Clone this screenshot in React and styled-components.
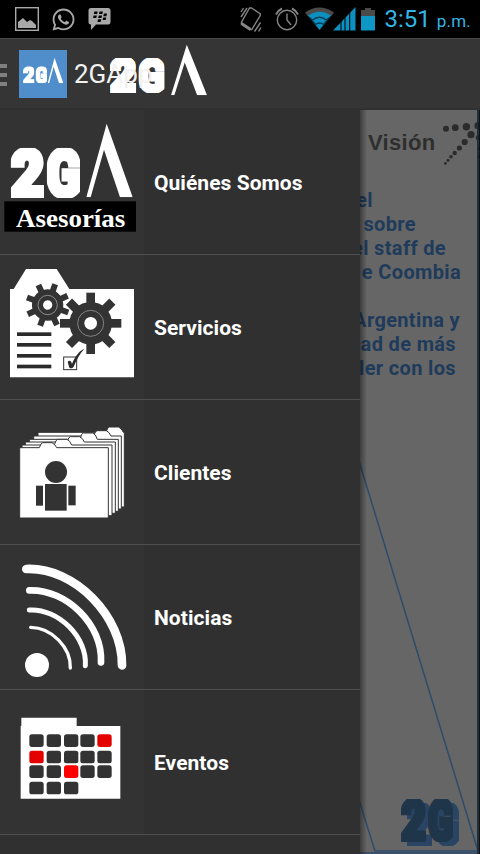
import styled, { createGlobalStyle } from 'styled-components'
import { FaWhatsapp } from 'react-icons/fa'

const GlobalStyle = createGlobalStyle`
  * {
    box-sizing: border-box;
  }
  body {
    margin: 0;
    background: #000;
    font-family: Roboto, "Liberation Sans", sans-serif;
  }
`
const Screen = styled.div`
  width: 480px;
  height: 854px;
  display: flex;
  flex-direction: column;
  overflow: hidden;
`
const StatusBar = styled.div`
  height: 38px;
  flex: none;
  display: flex;
  align-items: center;
  justify-content: space-between;
  padding: 0 9px 0 15px;
  background: #000;
`
const StatusGroup = styled.div`
  display: flex;
  align-items: center;
  gap: ${props => props.$gap}px;

  svg {
    display: block;
  }
`
const Clock = styled.div`
  display: flex;
  align-items: baseline;
  gap: 6px;
  margin-left: 7px;
  color: #33b5e5;
  font-size: 24px;
  line-height: 38px;
  padding-top: 2px;
`
const Meridiem = styled.span`
  font-size: 17px;
  letter-spacing: 0.2px;
`
const ActionBar = styled.header`
  height: 72px;
  flex: none;
  display: flex;
  align-items: center;
  background: #353535;
  border-top: 1px solid #484848;
  border-bottom: 2px solid #303030;
`
const DrawerHandle = styled.div`
  width: 7px;
  display: flex;
  flex-direction: column;
  gap: 5px;
  margin: 3px 12px 0 0;

  i {
    height: 4px;
    background: #808080;
  }
`
const AppIcon = styled.div`
  width: 48px;
  height: 48px;
  background: #4f8dcb;

  svg {
    display: block;
  }
`
const TitleArea = styled.div`
  position: relative;
  height: 69px;
  width: 140px;
  margin-left: 7px;
`
const Title = styled.h1`
  position: relative;
  margin: 0;
  font-size: 26px;
  font-weight: 400;
  line-height: 71px;
  color: #f1f1f1;
`
const TitleLogo = styled.svg`
  position: absolute;
  left: 36px;
  top: 5px;
`
const Body = styled.main`
  position: relative;
  flex: 1;
  min-height: 0;
  background: #666;
`
const Page = styled.div`
  position: relative;
  height: 744px;
  padding-top: 20px;
`
const PageArt = styled.svg`
  position: absolute;
  left: 0;
  top: 0;
`
const PageTitle = styled.h2`
  position: relative;
  margin: 0 0 0 368px;
  font: bold 22px/26px "Liberation Sans", sans-serif;
  letter-spacing: 0.3px;
  color: #2e2e2e;
`
const PageText = styled.div`
  position: relative;
  margin-top: 32px;
  color: #1f3b5b;
  font-size: 20px;
  font-weight: 700;
  line-height: 24px;
  letter-spacing: 0.35px;
`
const Line = styled.div`
  height: 24px;
  text-align: right;
  white-space: pre;
  padding-right: ${props => props.$end}px;
`
const Drawer = styled.nav`
  position: absolute;
  left: 0;
  top: 0;
  bottom: 0;
  width: 360px;
  overflow: hidden;
  background: #303030;
`
const DrawerShadow = styled.div`
  position: absolute;
  left: 360px;
  top: 0;
  bottom: 0;
  width: 7px;
  background: linear-gradient(to right, rgba(0, 0, 0, 0.4), transparent);
`
const Item = styled.div`
  height: 145px;
  display: flex;
  align-items: center;
  border-bottom: 1px solid #505050;
  color: #fff;
`
const ItemLabel = styled.span`
  padding-top: 2px;
  font-size: 21px;
  font-weight: 700;
  letter-spacing: 0.05px;
`
const ItemIcon = styled.div`
  width: 144px;
  height: 144px;
  margin-right: 10px;
  background: #333;

  svg {
    display: block;
  }
`

// block lettering: heavy strokes, corners cut straight by the clip shapes
const Letters = ({ id, x, y, width, height, color = '#fff' }) => (
  <svg x={x} y={y} width={width} height={height} viewBox="0 0 208 151" preserveAspectRatio="none">
    <clipPath id={`${id}-two`}>
      <polygon points="18,0 82,0 100,18 100,151 0,151 0,18" />
    </clipPath>
    <clipPath id={`${id}-gee`}>
      <polygon points="126,0 190,0 208,18 208,133 190,151 126,151 108,133 108,18" />
    </clipPath>
    <g fill={color} stroke={color} strokeWidth="17" strokeLinejoin="miter" fontFamily="Roboto" fontWeight="900" fontSize="196">
      <g clipPath={`url(#${id}-two)`}>
        <text x="0" y="144" textLength="101" lengthAdjust="spacingAndGlyphs">2</text>
      </g>
      <g clipPath={`url(#${id}-gee)`}>
        <text x="107" y="145" textLength="104" lengthAdjust="spacingAndGlyphs">G</text>
      </g>
    </g>
  </svg>
)

const Peak = ({ x, y, width, height }) => (
  <svg x={x} y={y} width={width} height={height} viewBox="0 0 139 221" preserveAspectRatio="none">
    <polygon points="61,0 139,221 101,221 53,78 13,221 0,221" fill="#fff" />
  </svg>
)

const Gear = ({ cx, cy, body, outer, tooth, ring, hole, turn = 0 }) => (
  <g transform={`translate(${cx} ${cy}) rotate(${turn})`}>
    <g fill="#333">
      <circle r={body} />
      {[0, 45, 90, 135, 180, 225, 270, 315].map(a => (
        <rect key={a} x={-tooth / 2} y={-outer} width={tooth} height={outer} transform={`rotate(${a})`} />
      ))}
    </g>
    <circle r={ring} fill="none" stroke="#aaa" strokeWidth="2" />
    <circle r={hole} fill="#fff" />
  </g>
)

const AboutIcon = () => (
  <svg width="144" height="144" viewBox="0 0 432 432">
    <Letters id="about" x={32} y={113} width={208} height={151} />
    <Peak x={259} y={41} width={139} height={221} />
    <rect x="13" y="274" width="395" height="91" fill="#000" />
    <text x="48" y="351" textLength="328" lengthAdjust="spacingAndGlyphs" fontFamily="Liberation Serif, serif" fontWeight="700" fontSize="74" fill="#fff">Asesorías</text>
  </svg>
)

const ServicesIcon = () => (
  <svg width="144" height="144" viewBox="0 0 432 432">
    <path d="M30 102h11l37-60h92l38 60h194v265H30z" fill="#fff" />
    <Gear cx={143} cy={150} body={47} outer={66} tooth={18} ring={29} hole={14} turn={20} />
    <Gear cx={272} cy={205} body={64} outer={92} tooth={26} ring={39} hole={19} />
    <g fill="#2b2b2b">
      <rect x="51" y="232" width="103" height="11" />
      <rect x="51" y="264" width="103" height="11" />
      <rect x="51" y="297" width="103" height="11" />
      <rect x="51" y="329" width="103" height="11" />
    </g>
    <rect x="191" y="306" width="39" height="38" fill="none" stroke="#333" strokeWidth="3" />
    <path d="M203 320c6-6 11-3 13 7 8-20 19-38 37-46-16 18-25 37-32 54-5 6-12 6-14 0z" fill="#2b2b2b" />
  </svg>
)

const ClientsIcon = () => {
  const folders = [
    { x: 114, y: 97, right: 373, bottom: 321, tab: 318, lift: 16 },
    { x: 101, y: 108, right: 364, bottom: 327, tab: 281, lift: 16 },
    { x: 88, y: 118, right: 355, bottom: 334, tab: 240, lift: 19 },
    { x: 76, y: 126, right: 346, bottom: 340, tab: 201, lift: 16 },
    { x: 66, y: 135, right: 336, bottom: 347, tab: 163, lift: 17 },
    { x: 59, y: 143, right: 325, bottom: 354, tab: 118, lift: 15 },
  ]
  return (
    <svg width="144" height="144" viewBox="0 0 432 432">
      {folders.map(f => (
        <path
          key={f.x}
          d={`M${f.x} ${f.y}H${f.tab}l5 ${-f.lift + 4} 5 -4h28l8 6 6 ${f.lift - 6}H${f.right}V${f.bottom}H${f.x}z`}
          fill="#fff"
          stroke="#333"
          strokeWidth="3"
        />
      ))}
      <g fill="#333">
        <circle cx="168" cy="216" r="33" />
        <rect x="135" y="252" width="65" height="80" />
        <rect x="108" y="257" width="21" height="60" />
        <rect x="205" y="257" width="22" height="59" />
      </g>
    </svg>
  )
}

const NewsIcon = () => (
  <svg width="144" height="144" viewBox="0 0 432 432" fill="none" stroke="#fff" strokeLinecap="round">
    <circle cx="111" cy="360" r="36" fill="#fff" stroke="none" />
    <path d="M79 72C225 66 368 215 366 361" strokeWidth="26" />
    <path d="M88 136C200 132 309 240 303 352" strokeWidth="20" />
    <path d="M88 195C175 190 262 277 256 362" strokeWidth="15" />
    <path d="M92 247C155 248 213 307 211 369" strokeWidth="10" />
  </svg>
)

const EventsIcon = () => {
  const columns = [88, 140, 192, 241, 292]
  const rows = [133, 182, 226, 275]
  const marked = { '0-4': '#e50000', '1-0': '#e50000', '2-2': '#f00' }
  return (
    <svg width="144" height="144" viewBox="0 0 432 432">
      <path d="M64 83h166v25h131v218H62V108h2z" fill="#fff" />
      {rows.map((y, r) => columns.slice(0, r === 3 ? 3 : 5).map((x, c) => (
        <rect key={`${r}-${c}`} x={x} y={y} width="43" height="38" rx="8" fill={marked[`${r}-${c}`] || '#333'} />
      )))}
    </svg>
  )
}

const items = [
  { label: 'Quiénes Somos', Icon: AboutIcon },
  { label: 'Servicios', Icon: ServicesIcon },
  { label: 'Clientes', Icon: ClientsIcon },
  { label: 'Noticias', Icon: NewsIcon },
  { label: 'Eventos', Icon: EventsIcon },
]

const lines = [
  { text: 'el', end: 107 },
  { text: 'sobre', end: 64 },
  { text: 'el staff de', end: 34 },
  { text: 'e Coombia', end: 19 },
  { text: '', end: 0 },
  { text: 'Argentina y', end: 20 },
  { text: 'ad de más', end: 24 },
  { text: 'ler con los', end: 24 },
]

const dots = [
  [446, 18.7, 3], [455.3, 17.7, 3.4], [466.4, 16.7, 3.7], [478, 15.7, 3.6],
  [471, 24.7, 3.6], [464.7, 32, 3.1], [459.4, 38, 2.6], [454.7, 43, 2.2],
  [451, 46.7, 1.8], [448, 50.3, 1.5], [445.4, 53.4, 1.3], [478.5, 27.7, 2.8],
  [479, 38.5, 1.8], [479, 46.5, 1.8],
]

const NotificationIcons = () => (
  <StatusGroup $gap={12}>
    <svg width="24" height="24" viewBox="0 0 24 24">
      <rect x=".7" y=".7" width="22.6" height="22.6" fill="none" stroke="#a9a9a9" strokeWidth="1.4" />
      <path d="M3 21v-6l5-4 4 4 3-2 2 1 4 4v3z" fill="#a9a9a9" />
    </svg>
    <FaWhatsapp size={25} color="#a9a9a9" />
    <svg width="23" height="24" viewBox="0 0 23 24">
      <path d="M3 1h17a2.5 2.5 0 0 1 2.5 2.500V15a2.5 2.5 0 0 1-2.500 2.5H8L3 23v-5.500a2.5 2.5 0 0 1-2.500-2.500V3.500A2.5 2.5 0 0 1 3 1z" fill="#a9a9a9" />
      <g fill="#000">
        <path d="M6.400 4.500h3.300l-.6 2.600H5.800zM11.600 4.500h3.300l-.6 2.600H11zM5.600 8.400h3.300l-.6 2.600H5zM10.800 8.400h3.300l-.6 2.600h-3.300zM15.900 6.600h3.100l-.6 2.600h-3.100zM15.200 10.400h3.100l-.6 2.600h-3.100zM10 12.300h3.300l-.6 2.600H9.400z" />
      </g>
    </svg>
  </StatusGroup>
)

const SystemIcons = () => (
  <svg width="138" height="28" viewBox="0 0 138 28">
    <g fill="none" stroke="#858585" strokeWidth="1.4">
      <path d="M10.500 3h2l9 6-.3 1.600-8.400 14h-2L2.300 19l.3-2z" />
      <path d="M2.500 18.500l9 6" strokeWidth="3" />
      <path d="M2 7l2.500-4M2 12l6-9M15.500 26.500l6-9M19.500 26.500l2.500-4" />
      <circle cx="48" cy="15" r="9.700" />
      <path d="M48 8.500V15l4 5" />
      <path d="M37 9.500a13 13 0 0 1 6-6M59 9.500a13 13 0 0 0-6-6" strokeWidth="2" />
    </g>
    <path d="M66 7.500Q80.500-2.500 95 7.500l-3 4Q80.500 4 69 11.500z" fill="#4a4a4a" />
    <path d="M69 10.500Q80.500 2.800 92 10.500L80.500 25z" fill="#0d8fc0" />
    <g fill="none" stroke="#003e55" strokeWidth="1.5">
      <path d="M70.500 12.500l3 2.500Q80.500 9.500 87.500 15l3-2.500M74 16.500l2.500 3q4-3 8 0l2.500-3" />
    </g>
    <path d="M94 25.500L116.500 2v23.500z" fill="#0d8fc0" />
    <path d="M102 10v16M106 8v18M110.700 4v22" stroke="#000" strokeWidth="1" />
    <path d="M122 5h4V3h6v2h4v6h-14z" fill="#4a4a4a" />
    <path d="M122 11h14v14.500h-14z" fill="#0d96c6" />
  </svg>
)

const App = () => {
  return (
    <Screen>
      <GlobalStyle />
      <StatusBar>
        <NotificationIcons />
        <StatusGroup $gap={0}>
          <SystemIcons />
          <Clock>3:51<Meridiem>p.m.</Meridiem></Clock>
        </StatusGroup>
      </StatusBar>
      <ActionBar>
        <DrawerHandle><i /><i /><i /></DrawerHandle>
        <AppIcon>
          <svg width="48" height="48" viewBox="0 0 144 144">
            <Letters id="app" x={12} y={49} width={72} height={51} />
            <Peak x={86} y={23} width={47} height={77} />
          </svg>
        </AppIcon>
        <TitleArea>
          <TitleLogo width="98" height="52" viewBox="0 0 294 156">
            <Letters id="title" x={0} y={42} width={164} height={105} />
            <Peak x={183} y={2} width={108} height={152} />
          </TitleLogo>
          <Title>2GApp</Title>
        </TitleArea>
      </ActionBar>
      <Body>
        <Page>
          <PageArt width="480" height="744" viewBox="0 0 480 744">
            <g fill="none" stroke="#2f4b6c" strokeWidth="1.5">
              <path d="M359 351L478 741" />
              <path d="M359 690L375 741H478" />
              <path d="M360 743h118" />
            </g>
            <Letters id="shade" x={407} y={693} width={52} height={43} color="#2a4564" />
            <Letters id="mark" x={401} y={689} width={52} height={43} color="#1f3549" />
            <g fill="#2b2b2b">
              {dots.map(([x, y, r]) => <circle key={`${x}-${y}`} cx={x} cy={y} r={r} />)}
            </g>
            <rect x="477" y="0" width="1.5" height="744" fill="#16324b" />
            <rect x="478.5" y="0" width="1.5" height="744" fill="#111" />
          </PageArt>
          <PageTitle>Visión</PageTitle>
          <PageText>
            {lines.map((line, i) => <Line key={i} $end={line.end}>{line.text}</Line>)}
          </PageText>
        </Page>
        <DrawerShadow />
        <Drawer>
          {items.map(({ label, Icon }) => (
            <Item key={label}>
              <ItemIcon><Icon /></ItemIcon>
              <ItemLabel>{label}</ItemLabel>
            </Item>
          ))}
        </Drawer>
      </Body>
    </Screen>
  )
}

export default App
